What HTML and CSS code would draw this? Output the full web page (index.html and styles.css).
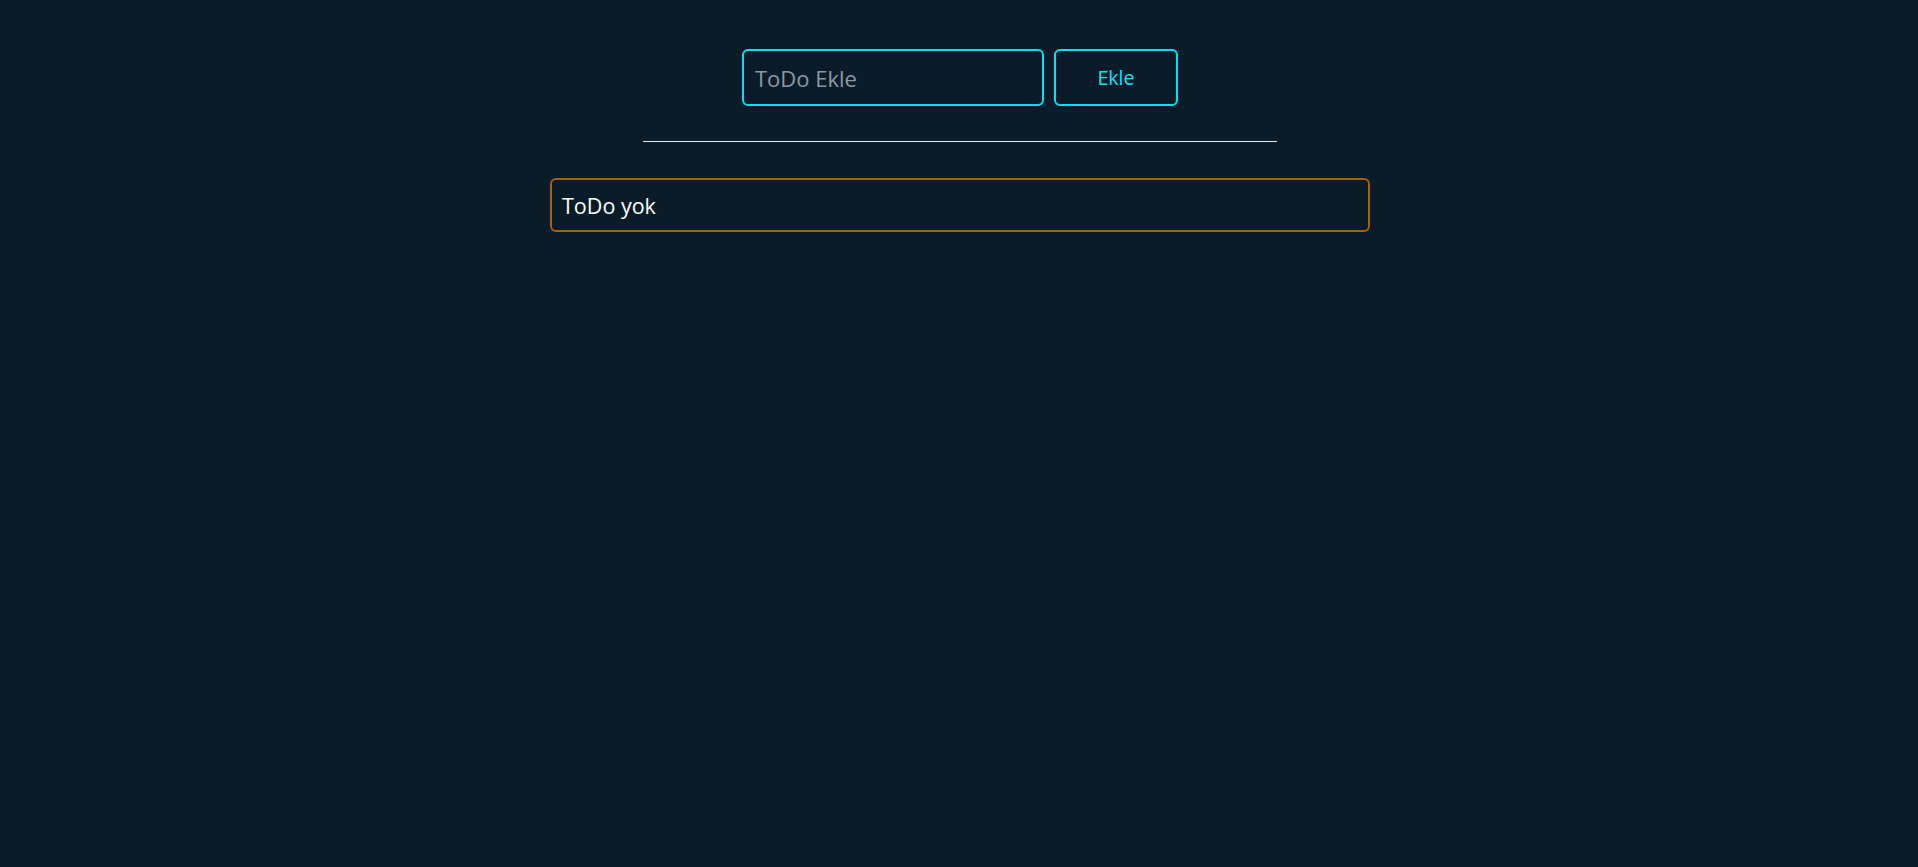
FILE: index.html
```html
<!DOCTYPE html>
<html lang="tr">
<head>
<meta charset="utf-8">
<title>ToDo</title>
<link rel="stylesheet" href="styles.css">
</head>
<body>
<main class="app">
  <form class="add-form">
    <input class="todo-input" type="text" placeholder="ToDo Ekle">
    <button class="add-btn" type="button">Ekle</button>
  </form>
  <hr class="divider">
  <div class="empty">ToDo yok</div>
</main>
</body>
</html>
```

FILE: styles.css
```css
html, body {
  margin: 0;
  padding: 0;
  background: #0a1c29;
  min-height: 100vh;
}
body {
  font-family: "Open Sans", "Noto Sans", sans-serif;
  color: #ffffff;
}
.app {
  display: flex;
  flex-direction: column;
  align-items: center;
  padding-top: 49px;
  padding-left: 2px;
}
.add-form {
  display: flex;
  gap: 10px;
}
.todo-input {
  box-sizing: border-box;
  width: 302px;
  height: 57px;
  border: 2px solid #00e1f0;
  border-radius: 6px;
  background: transparent;
  color: #ffffff;
  font-family: inherit;
  font-size: 22px;
  padding: 0 11px;
  outline: none;
}
.todo-input::placeholder {
  color: #8c9aa5;
}
.add-btn {
  box-sizing: border-box;
  width: 124px;
  height: 57px;
  border: 2px solid #00e1f0;
  border-radius: 6px;
  background: transparent;
  color: #00e6f2;
  font-family: inherit;
  font-size: 19.5px;
  cursor: pointer;
}
.divider {
  width: 634px;
  margin: 35px 0 0;
  border: 0;
  border-top: 1px solid #e8ecef;
  height: 0;
}
.empty {
  box-sizing: border-box;
  width: 820px;
  height: 54px;
  margin-top: 36px;
  border: 2px solid #a8620c;
  border-radius: 6px;
  display: flex;
  align-items: center;
  padding: 0 10px;
  font-size: 21.5px;
}
```
